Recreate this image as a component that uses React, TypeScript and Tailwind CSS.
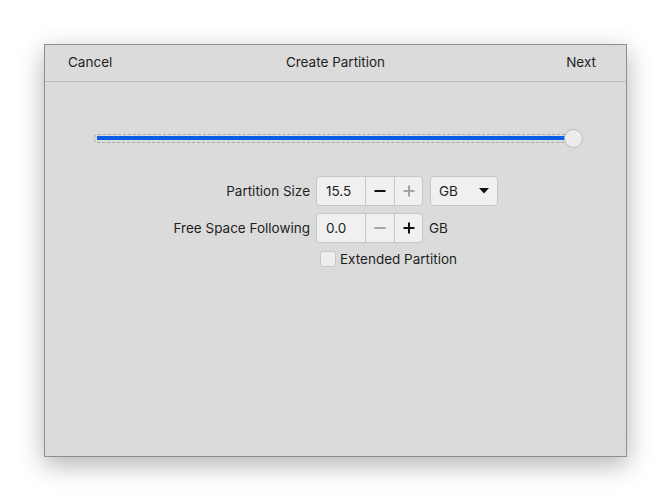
import React from "react";

function Spin({ value, minusOn, plusOn }: { value: string; minusOn: boolean; plusOn: boolean }) {
  return (
    <div className="flex h-[30px] rounded-[4px] border border-[#c6c6c6] bg-[#f0f0f0] overflow-hidden">
      <div className="w-[48px] flex items-center pl-[9px] text-[#222]">{value}</div>
      <div className="w-[29px] border-l border-[#c6c6c6] flex items-center justify-center">
        <svg width="12" height="12" viewBox="0 0 12 12">
          <rect x="0.5" y="5" width="11" height="2" fill={minusOn ? "#111" : "#a3a3a3"} />
        </svg>
      </div>
      <div className="w-[28px] border-l border-[#c6c6c6] flex items-center justify-center">
        <svg width="12" height="12" viewBox="0 0 12 12">
          <rect x="0.5" y="5" width="11" height="2" fill={plusOn ? "#111" : "#a3a3a3"} />
          <rect x="5" y="0.5" width="2" height="11" fill={plusOn ? "#111" : "#a3a3a3"} />
        </svg>
      </div>
    </div>
  );
}

export default function App() {
  return (
    <div
      className="w-[671px] h-[501px] bg-white pl-[44px] pt-[44px] text-[13.5px]"
      style={{ fontFamily: "Inter, 'Open Sans', sans-serif" }}
    >
      <div className="w-[583px] h-[413px] border border-[#8e8e8e] bg-[#dbdbdb] shadow-[0_8px_24px_rgba(0,0,0,0.3)] flex flex-col">
        <div className="h-[37px] grid grid-cols-3 items-center px-[23px] pb-[1px] border-b border-[#bababa] text-[#1f1f1f]">
          <div>Cancel</div>
          <div className="text-center">Create Partition</div>
          <div className="text-right pr-[7px]">Next</div>
        </div>

        <div className="pl-[49px] pr-[43px] pt-[46px] h-[20px] box-content flex items-center">
          <div className="flex-1 flex items-center relative">
            <div className="flex-1 h-[9px] rounded-[4px] border border-dashed border-[#a9a9a9] flex items-center px-[2px]">
              <div className="flex-1 h-[4px] bg-[#0a5ce6]" />
            </div>
            <div className="w-[19px] h-[19px] rounded-full bg-[#ececec] border border-[#bcbcbc] -ml-[9px] shrink-0" />
          </div>
        </div>

        <div className="mt-[28px] flex flex-col gap-[7px] text-[#1f1f1f]">
          <div className="flex items-center">
            <div className="w-[271px] text-right pr-[6px]">Partition Size</div>
            <Spin value="15.5" minusOn={true} plusOn={false} />
            <div className="ml-[7px] w-[68px] h-[30px] rounded-[4px] border border-[#c6c6c6] bg-[#f0f0f0] flex items-center justify-between pl-[8px] pr-[8px]">
              <span>GB</span>
              <svg width="10" height="6" viewBox="0 0 10 6">
                <path d="M0 0 L10 0 L5 5.5 Z" fill="#111" />
              </svg>
            </div>
          </div>
          <div className="flex items-center">
            <div className="w-[271px] text-right pr-[6px]">Free Space Following</div>
            <Spin value="0.0" minusOn={false} plusOn={true} />
            <div className="ml-[6px]">GB</div>
          </div>
          <div className="flex items-center -mt-[1px]">
            <div className="w-[275px]" />
            <div className="w-[16px] h-[16px] rounded-[3px] border border-[#c6c6c6] bg-[#eeeeee]" />
            <div className="ml-[4px]">Extended Partition</div>
          </div>
        </div>
      </div>
    </div>
  );
}
